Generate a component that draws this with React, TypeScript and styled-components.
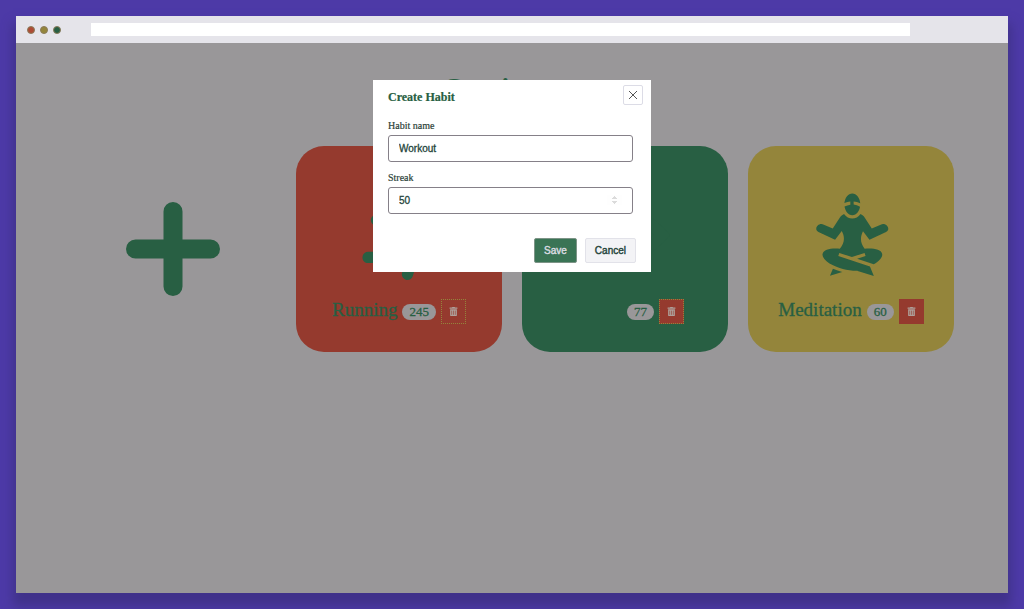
import React from 'react';
import styled, { createGlobalStyle } from 'styled-components';
import { GiMeditation } from 'react-icons/gi';
import { FaTrashAlt, FaRunning, FaCode } from 'react-icons/fa';

const green = '#285f43';
const red = '#953a2e';
const olive = '#94853b';
const grey = '#999799';

const Global = createGlobalStyle`
  * { box-sizing: border-box; }
  html, body, #root { height: 100%; }
  body { margin: 0; background: #4d3aa7; font-family: 'Liberation Serif', serif; }
`;
const Page = styled.div`
  min-height: 100%;
  padding: 16px;
  display: flex;
`;
const Browser = styled.div`
  flex: 1;
  display: flex;
  flex-direction: column;
  background: ${grey};
  box-shadow: 0 10px 10px 3px #40328a;
`;
const TopBar = styled.div`
  display: flex;
  align-items: center;
  height: 27px;
  padding: 0 11px;
  background: #e5e4ea;
`;
const Dots = styled.div`
  display: flex;
  gap: 5px;
  width: 64px;
`;
const Dot = styled.span<{ $color: string }>`
  width: 8px;
  height: 8px;
  border-radius: 50%;
  background: ${(p) => p.$color};
  border: 1px solid #8b7c5a;
`;
const Address = styled.input`
  flex: 1;
  height: 13px;
  margin-right: 87px;
  border: 0;
  background: #fff;
`;
const Main = styled.main`
  position: relative;
  flex: 1;
  padding: 29px 54px;
  color: ${green};
`;
const Title = styled.h1`
  margin: 0;
  font-size: 27px;
  line-height: 32px;
  text-align: center;
`;
const Grid = styled.div`
  display: grid;
  grid-template-columns: repeat(4, 1fr);
  gap: 20px;
  margin-top: 42px;
`;
const AddButton = styled.button`
  display: grid;
  place-items: center;
  padding: 0;
  border: 0;
  background: none;
  color: ${green};
`;
const Card = styled.article<{ $color: string }>`
  display: flex;
  flex-direction: column;
  align-items: center;
  justify-content: space-between;
  aspect-ratio: 1;
  padding: 44px 0 28px;
  border-radius: 28px;
  background: ${(p) => p.$color};
`;
const CardFooter = styled.div`
  display: flex;
  align-items: center;
  gap: 5px;
`;
const Name = styled.h2`
  margin: 0;
  padding-bottom: 4px;
  font-size: 19px;
  font-weight: 400;
  line-height: 20px;
  -webkit-text-stroke: 0.3px ${green};
`;
const Count = styled.span`
  padding: 0 7px;
  border-radius: 8px;
  background: ${grey};
  font-size: 13px;
  line-height: 16px;
  -webkit-text-stroke: 0.3px ${green};
`;
const Delete = styled.button<{ $outline: string }>`
  display: grid;
  place-items: center;
  width: 25px;
  height: 25px;
  padding: 0;
  border: 1px dotted ${(p) => p.$outline};
  background: ${red};
  color: #aea09a;
`;
const Overlay = styled.div`
  position: absolute;
  inset: 0;
  display: flex;
  align-items: flex-start;
  justify-content: center;
  padding-top: 37px;
`;
const Modal = styled.form`
  width: 278px;
  padding: 5px 8px 9px 15px;
  background: #fff;
`;
const ModalHeader = styled.header`
  display: flex;
  justify-content: space-between;
`;
const ModalTitle = styled.h2`
  margin: 4px 0 0;
  font-size: 12px;
  line-height: 17px;
  -webkit-text-stroke: 0.2px ${green};
`;
const Close = styled.button`
  display: grid;
  place-items: center;
  width: 20px;
  height: 20px;
  padding: 0;
  border: 1px solid #dcdce6;
  border-radius: 2px;
  background: #fff;
  color: #555;
`;
const Fields = styled.div`
  display: flex;
  flex-direction: column;
  gap: 9px;
  margin: 13px 10px 0 0;
`;
const Field = styled.div`
  display: flex;
  flex-direction: column;
  gap: 2px;
`;
const Label = styled.label`
  font-size: 10px;
  line-height: 14px;
  color: #2c4238;
  -webkit-text-stroke: 0.2px;
`;
const Input = styled.input`
  height: 27px;
  padding: 0 10px;
  border: 1px solid #858088;
  border-radius: 3px;
  color: #24443a;
  font: 10px 'Liberation Sans', sans-serif;
  -webkit-text-stroke: 0.3px;

  &::-webkit-inner-spin-button {
    opacity: 0.3;
  }
`;
const Actions = styled.footer`
  display: flex;
  justify-content: flex-end;
  gap: 8px;
  margin: 24px 7px 0 0;
`;
const Button = styled.button<{ $primary?: boolean }>`
  height: 25px;
  padding: 0 9px;
  border: 1px solid ${(p) => (p.$primary ? '#7d9487' : '#e2e2e9')};
  border-radius: 2px;
  background: ${(p) => (p.$primary ? '#3a7455' : '#f3f3f6')};
  color: ${(p) => (p.$primary ? '#dcdce2' : '#24443a')};
  font: 10px 'Liberation Sans', sans-serif;
  -webkit-text-stroke: 0.4px;
`;

const habits = [
  { name: 'Running', count: 245, color: red, outline: olive, icon: <FaRunning size={90} /> },
  { name: 'Coding', count: 77, color: green, outline: olive, icon: <FaCode size={90} /> },
  { name: 'Meditation', count: 60, color: olive, outline: red, icon: <GiMeditation size={90} /> },
];

export default function App() {
  return (
    <Page>
      <Global />
      <Browser>
        <TopBar>
          <Dots>
            <Dot $color="#ad4b35" />
            <Dot $color={olive} />
            <Dot $color={green} />
          </Dots>
          <Address aria-label="Address" />
        </TopBar>
        <Main>
          <Title>Consistency</Title>
          <Grid>
            <AddButton aria-label="Add habit">
              <svg width="94" height="94" viewBox="0 0 94 94" fill="none" stroke="currentColor" strokeWidth="19" strokeLinecap="round">
                <path d="M47 9.5v75M9.5 47h75" />
              </svg>
            </AddButton>
            {habits.map((h) => (
              <Card key={h.name} $color={h.color}>
                {h.icon}
                <CardFooter>
                  <Name>{h.name}</Name>
                  <Count>{h.count}</Count>
                  <Delete $outline={h.outline} aria-label={`Delete ${h.name}`}>
                    <FaTrashAlt size={9} />
                  </Delete>
                </CardFooter>
              </Card>
            ))}
          </Grid>
          <Overlay>
            <Modal role="dialog" aria-labelledby="modal-title">
              <ModalHeader>
                <ModalTitle id="modal-title">Create Habit</ModalTitle>
                <Close type="button" aria-label="Close">
                  <svg width="10" height="10" viewBox="0 0 10 10" stroke="currentColor">
                    <path d="M1 1l8 8M9 1l-8 8" />
                  </svg>
                </Close>
              </ModalHeader>
              <Fields>
                <Field>
                  <Label htmlFor="name">Habit name</Label>
                  <Input id="name" defaultValue="Workout" />
                </Field>
                <Field>
                  <Label htmlFor="streak">Streak</Label>
                  <Input id="streak" type="number" defaultValue={50} />
                </Field>
              </Fields>
              <Actions>
                <Button type="button" $primary>Save</Button>
                <Button type="button">Cancel</Button>
              </Actions>
            </Modal>
          </Overlay>
        </Main>
      </Browser>
    </Page>
  );
}
